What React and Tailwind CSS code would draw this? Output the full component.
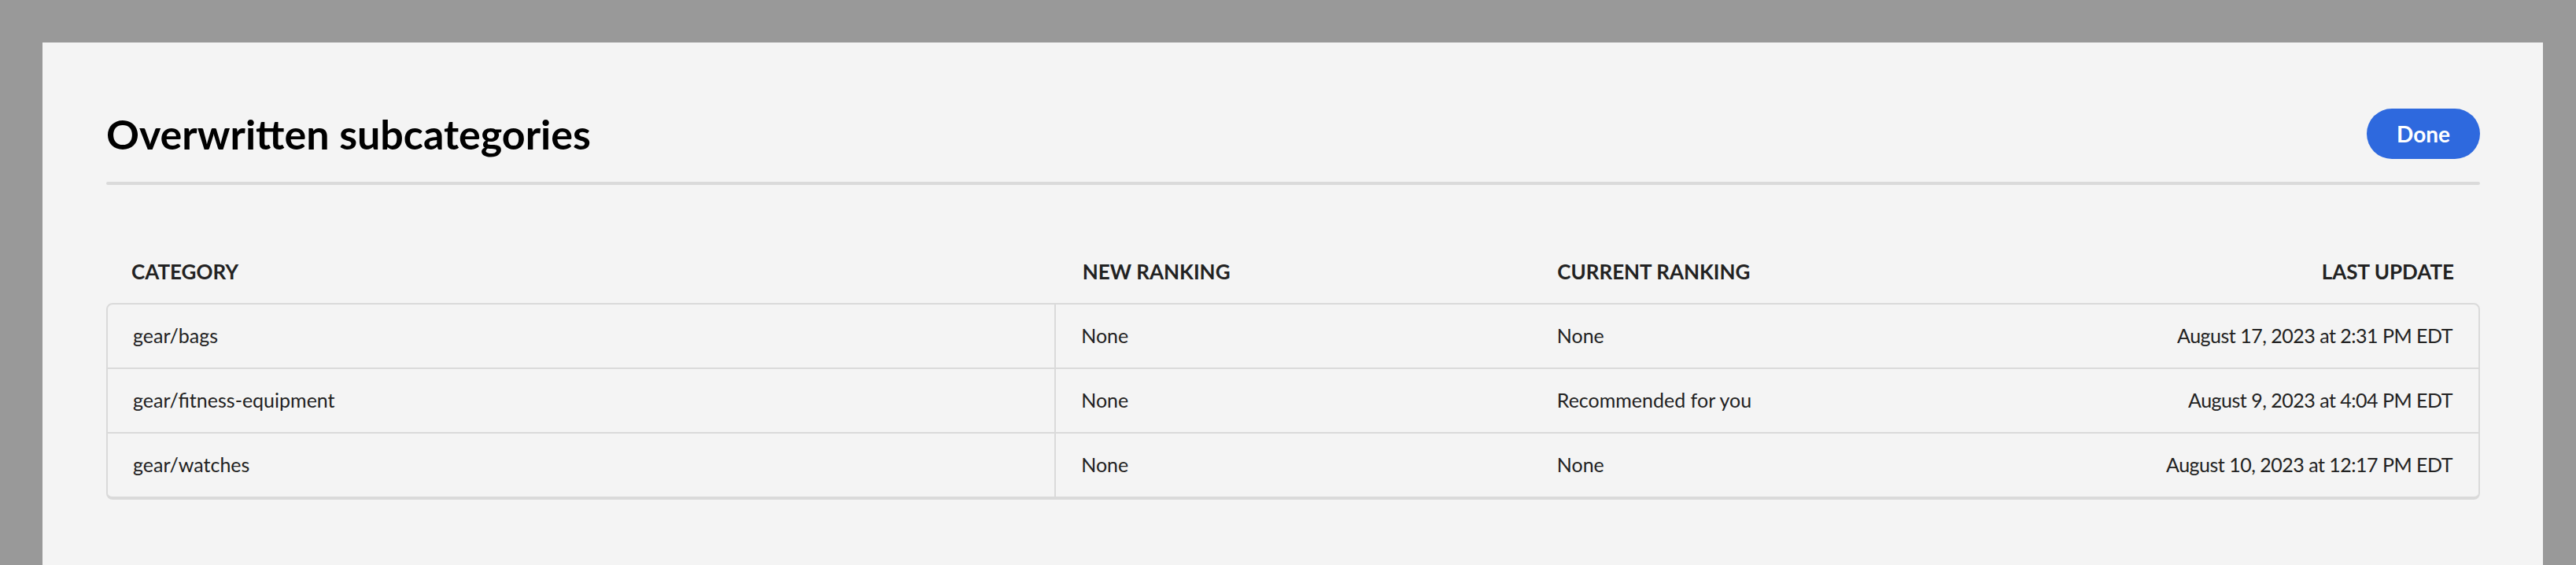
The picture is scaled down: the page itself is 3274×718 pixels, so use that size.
import React from "react";

const rows = [
  { category: "gear/bags", next: "None", current: "None", updated: "August 17, 2023 at 2:31 PM EDT" },
  { category: "gear/fitness-equipment", next: "None", current: "Recommended for you", updated: "August 9, 2023 at 4:04 PM EDT" },
  { category: "gear/watches", next: "None", current: "None", updated: "August 10, 2023 at 12:17 PM EDT" },
];

export default function App() {
  return (
    <div className="h-[718px] overflow-hidden bg-[#999999] pt-[54px] pl-[54px] pr-[42px] font-['Lato',_'Noto_Sans',_sans-serif]">
      <div className="h-[664px] bg-[#f4f4f4] pl-[81px] pr-[80px] pt-[84px]">
        {/* Header */}
        <div className="flex items-center justify-between h-[64px]">
          <h1 className="text-[52px] font-bold leading-none text-black">Overwritten subcategories</h1>
          <button className="w-[144px] h-[64px] rounded-full bg-[#2e69de] text-white text-[28px] font-bold">
            Done
          </button>
        </div>
        <div className="mt-[29px] h-[4px] rounded-full bg-[#dadada]" />

        {/* Table */}
        <div className="mt-[80px]">
          <div className="grid grid-cols-[2fr_1fr_1fr_1fr] h-[60px] items-center text-[26px] font-bold text-[#222222] mb-[10px]">
            <div className="px-[32px]">CATEGORY</div>
            <div className="px-[34px]">NEW RANKING</div>
            <div className="px-[34px]">CURRENT RANKING</div>
            <div className="px-[33px] text-right">LAST UPDATE</div>
          </div>
          <div className="rounded-[8px] border-2 border-b-4 border-[#dadada] overflow-hidden">
            {rows.map((r, i) => (
              <div
                key={r.category}
                className={`grid grid-cols-[2fr_1fr_1fr_1fr] items-center text-[25px] text-[#222222] ${i > 0 ? "h-[82px] border-t-2 border-[#dadada]" : "h-[80px]"}`}
              >
                <div className="h-full flex items-center px-[32px] border-r-2 border-[#dadada]">{r.category}</div>
                <div className="px-[32px]">{r.next}</div>
                <div className="px-[34px]">{r.current}</div>
                <div className="px-[33px] text-right tracking-[-0.5px]">{r.updated}</div>
              </div>
            ))}
          </div>
        </div>
      </div>
    </div>
  );
}
